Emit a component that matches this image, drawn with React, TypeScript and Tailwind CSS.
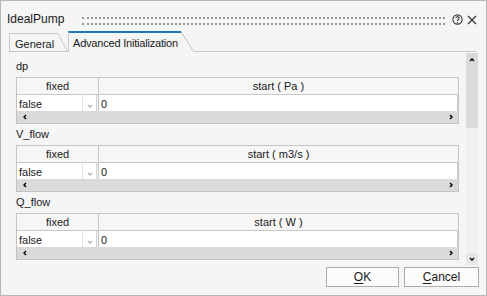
import React from 'react';

const font = "font-['Liberation_Sans',Arial,sans-serif]";

const Chevron = ({ dir, className }: { dir: 'up' | 'down' | 'left' | 'right'; className?: string }) => {
  const d = {
    up: 'M1 4L3 2L5 4',
    down: 'M1 2L3 4L5 2',
    left: 'M4 1L2 3L4 5',
    right: 'M2 1L4 3L2 5',
  }[dir];
  return (
    <svg width="6" height="6" viewBox="0 0 6 6" className={className}>
      <path d={d} fill="none" stroke="currentColor" strokeWidth="1.4" />
    </svg>
  );
};

const ParamTable = ({ label, unit }: { label: string; unit: string }) => (
  <div className="mb-[2px]">
    <div className="h-[19px] leading-[17px] text-[11px] text-[#1a1a1a]">{label}</div>
    <div className="border border-[#c4c4c4] bg-white text-[11px] text-[#1a1a1a]">
      {/* header */}
      <div className="flex h-[17px] border-b border-[#c8c8c8] bg-[#f6f6f6]">
        <div className="w-[82px] border-r border-[#c8c8c8] flex items-center justify-center">fixed</div>
        <div className="flex-1 flex items-center justify-center">start ( {unit} )</div>
      </div>
      {/* data row */}
      <div className="flex h-[16px] overflow-hidden bg-white">
        <div className="w-[66px] border-r border-[#e0e0e0] pl-[2px] pt-[3px] leading-[13px]">false</div>
        <div className="w-[13px] flex justify-center pt-[8px] text-[#b0b0b0]">
          <Chevron dir="down" />
        </div>
        <div className="w-[3px] border-l border-r border-l-[#d6d6d6] border-r-[#c4c4c4] bg-[#f2f2f2]" />
        <div className="flex-1 pl-[2px] pt-[3px] leading-[13px] border-r border-[#d0d0d0]">0</div>
      </div>
      {/* horizontal scrollbar */}
      <div className="h-[12px] bg-[#dadada] flex items-center justify-between pl-[5px] pr-[4px] text-black">
        <Chevron dir="left" />
        <Chevron dir="right" />
      </div>
    </div>
  </div>
);

export default function App() {
  return (
    <div className={`w-[487px] h-[296px] border border-[#b8b8b8] bg-[#f5f5f5] flex flex-col overflow-hidden select-none ${font}`}>
      {/* title bar */}
      <div className="h-[30px] flex items-center pl-[6px] pr-[9px] shrink-0">
        <div className="w-[75px] text-[12px] text-[#1a1a1a] pt-[6px] leading-[14px]">IdealPump</div>
        <div className="flex-1 h-[8px] mt-[9px] border-t-2 border-b-2 border-dotted border-[#969696]" />
        <div className="ml-[7px] mt-[7px] w-[11px] h-[11px] text-[#333]">
          <svg width="11" height="11" viewBox="0 0 11 11">
            <circle cx="5.5" cy="5.5" r="4.6" fill="none" stroke="currentColor" strokeWidth="1.1" />
            <path d="M3.9 4.3a1.6 1.6 0 1 1 2.3 1.4c-.5.25-.7.5-.7 1v.3" fill="none" stroke="currentColor" strokeWidth="1.1" />
            <circle cx="5.5" cy="8.3" r="0.65" fill="currentColor" />
          </svg>
        </div>
        <div className="ml-[4px] mt-[7px] w-[10px] h-[10px] text-[#333]">
          <svg width="10" height="10" viewBox="0 0 10 10">
            <path d="M1 1L9 9M9 1L1 9" stroke="currentColor" strokeWidth="1.2" />
          </svg>
        </div>
      </div>

      {/* tabs */}
      <div className="h-[21px] flex pl-[8px] pr-[10px] shrink-0 text-[11px] text-[#1a1a1a]">
        <div className="mt-[2px] h-[19px] w-[49px] border-l border-t border-b border-[#c8c8c8] pl-[5px] pt-[4px] leading-[12px] bg-[#f5f5f5]">
          General
        </div>
        <svg width="10" height="19" viewBox="0 0 10 19" className="mt-[2px] shrink-0">
          <path d="M0 0.5L9.5 18.5" stroke="#c8c8c8" strokeWidth="1" />
          <path d="M0 18.5H10" stroke="#c8c8c8" strokeWidth="1" />
        </svg>
        <div className="h-[21px] w-[113px] border-l border-[#c8c8c8] border-t-2 border-t-[#1b7bb8] pl-[4px] pt-[4px] leading-[12px] tracking-[-0.2px] whitespace-nowrap">
          Advanced Initialization
        </div>
        <svg width="13" height="21" viewBox="0 0 13 21" className="shrink-0">
          <path d="M0 0.5L12.5 20.5" stroke="#c0c0c0" strokeWidth="1" />
        </svg>
        <div className="flex-1 border-b border-[#c8c8c8]" />
      </div>

      {/* body */}
      <div className="h-[213px] flex shrink-0">
        <div className="flex-1 overflow-hidden pl-[15px] pt-[6px]">
          <ParamTable label="dp" unit="Pa" />
          <ParamTable label="V_flow" unit="m3/s" />
          <ParamTable label="Q_flow" unit="W" />
        </div>
        <div className="ml-[7px] mr-[8px] mt-[1px] w-[12px] flex flex-col">
          <div className="h-[75px] bg-[#dadada] flex justify-center pt-[4px] text-black">
            <Chevron dir="up" />
          </div>
          <div className="flex-1 bg-[#f0f0f0]" />
          <div className="h-[12px] bg-[#e6e6e6] flex justify-center items-center text-black">
            <Chevron dir="down" />
          </div>
        </div>
      </div>

      {/* buttons */}
      <div className="flex justify-end gap-[5px] pr-[7px] pt-[2px] text-[12px] text-[#1a1a1a]">
        <button className="w-[73px] h-[20px] border border-[#adadad] bg-[#fbfbfb] leading-[18px]">
          <span className="underline underline-offset-2">O</span>K
        </button>
        <button className="w-[75px] h-[20px] border border-[#adadad] bg-[#fbfbfb] leading-[18px]">
          <span className="underline underline-offset-2">C</span>ancel
        </button>
      </div>
    </div>
  );
}
